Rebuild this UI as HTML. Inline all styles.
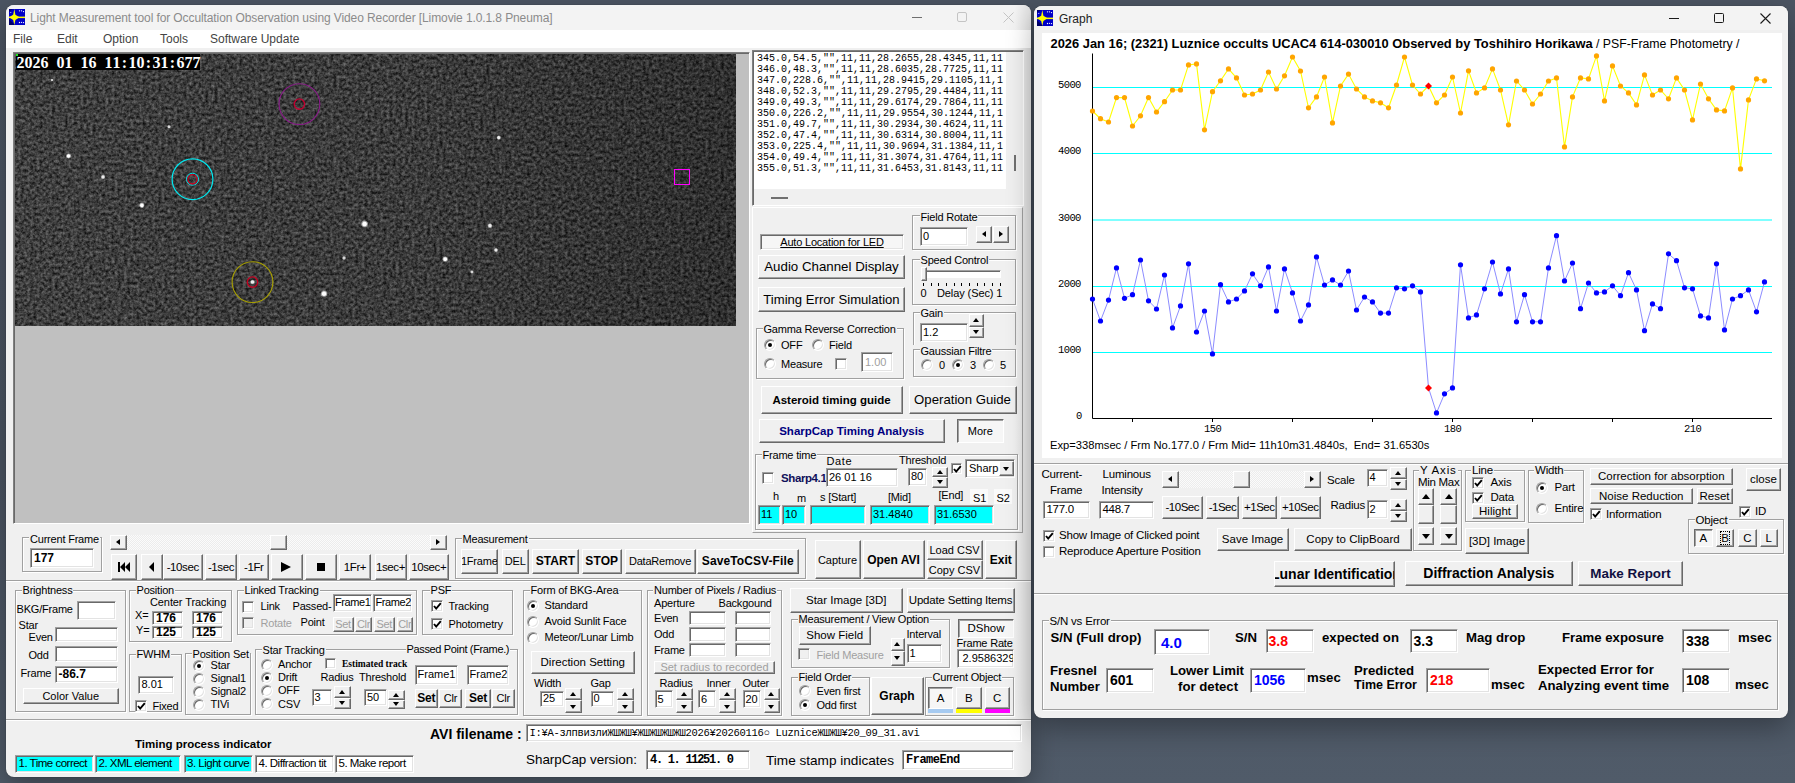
<!DOCTYPE html>
<html><head><meta charset="utf-8"><title>Limovie</title>
<style>
html,body{margin:0;padding:0;}
body{width:1795px;height:783px;overflow:hidden;position:relative;
 background:linear-gradient(180deg,#4c5563 0%,#4a5361 60%,#505b69 100%);
 font-family:"Liberation Sans",sans-serif;color:#000;}
div,span{box-sizing:border-box;}
body>div{position:absolute;}
.t{white-space:nowrap;}
.win{border-radius:8px;background:#f0f0f0;overflow:hidden;box-shadow:0 10px 28px rgba(0,0,0,0.32),0 0 1px rgba(0,0,0,0.5);}
.b{background:#f0f0f0;border:1px solid;border-color:#fff #696969 #696969 #fff;box-shadow:inset -1px -1px #a0a0a0;
 display:flex;align-items:center;justify-content:center;white-space:nowrap;overflow:hidden;font-size:11px;}
.bp{background:#f4f4f4;border:1px solid;border-color:#696969 #fff #fff #696969;box-shadow:inset 1px 1px #a0a0a0;
 display:flex;align-items:center;justify-content:center;white-space:nowrap;overflow:hidden;font-size:11px;}
.tb{background:#fff;border:1px solid;border-color:#a0a0a0 #fff #fff #a0a0a0;box-shadow:inset 1px 1px #696969,inset -1px -1px #e3e3e3;
 overflow:hidden;white-space:nowrap;display:flex;align-items:center;}
.tt{position:absolute;line-height:1;}
.gb{border:1px solid #a0a0a0;box-shadow:inset 1px 1px #fff,1px 1px #fff;}
.cb{background:#fff;border:1px solid;border-color:#a0a0a0 #fff #fff #a0a0a0;box-shadow:inset 1px 1px #696969,inset -1px -1px #e3e3e3;}
.rb{border-radius:50%;background:#fff;border:1px solid;border-color:#a0a0a0 #fff #fff #a0a0a0;box-shadow:inset 1px 1px #696969,inset -1px -1px #e3e3e3;}
.rd{position:absolute;left:3px;top:3px;width:4px;height:4px;border-radius:50%;background:#000;}
.tri{width:0;height:0;}
.mono{font-family:"Liberation Mono",monospace;}
.dis{color:#a0a0a0;}

</style></head><body>
<div class="win" style="left:6px;top:5px;width:1025px;height:772px;"></div>
<div style="left:6px;top:5px;width:1025px;height:25px;background:#f3f3f3;border-radius:8px 8px 0 0;"></div>
<div style="left:1015px;top:5px;width:16px;height:772px;background:linear-gradient(90deg,rgba(0,0,0,0),rgba(0,0,0,0.07));border-radius:0 8px 8px 0;"></div>
<div style="left:9px;top:9px;width:16px;height:16px;"><svg width="16" height="16" viewBox="0 0 16 16"><rect x="0" y="0" width="16" height="16" fill="#0000c8"/>
<path d="M0 10 L0 16 L6 16 L3 13 Z" fill="#000050" opacity="0.8"/><path d="M0 0 L4 0 L0 3 Z" fill="#000050" opacity="0.7"/>
<rect x="0" y="7.6" width="16" height="1.5" fill="#ffff00"/>
<path d="M5.3 0 L6.4 5.8 L10.5 8.35 L6.4 10.9 L5.3 16 L4.2 10.9 L0 8.35 L4.2 5.8 Z" fill="#ffff00"/>
<g fill="#fff"><circle cx="10.5" cy="1.8" r="0.65"/><circle cx="12.5" cy="1.8" r="0.65"/><circle cx="14.5" cy="2.6" r="0.65"/>
<circle cx="10.5" cy="13.5" r="0.65"/><circle cx="12.5" cy="13.3" r="0.65"/><circle cx="14.5" cy="13.6" r="0.65"/><circle cx="1.8" cy="3.5" r="0.5"/></g></svg></div>
<div class="t" style="left:30px;top:11px;font-size:12px;line-height:12px;color:#8b8b8b;letter-spacing:-0.1px;margin-top:1px;">Light Measurement tool for Occultation Observation using Video Recorder [Limovie 1.0.1.8 Pneuma]</div>
<div style="left:912px;top:17px;width:10px;height:1px;background:#6f6f6f;"></div>
<div style="left:957px;top:12px;width:10px;height:10px;border:1px solid #c4c4c4;border-radius:2px;"></div>
<svg style="position:absolute;left:1003px;top:12px" width="11" height="11"><path d="M0.5 0.5 L10.5 10.5 M10.5 0.5 L0.5 10.5" stroke="#c4c4c4" stroke-width="1"/></svg>
<div style="left:6px;top:30px;width:1025px;height:18px;background:#fff;"></div>
<div class="t" style="left:13px;top:33px;font-size:12px;line-height:12px;color:#444;">File</div>
<div class="t" style="left:57px;top:33px;font-size:12px;line-height:12px;color:#444;">Edit</div>
<div class="t" style="left:103px;top:33px;font-size:12px;line-height:12px;color:#444;">Option</div>
<div class="t" style="left:160px;top:33px;font-size:12px;line-height:12px;color:#444;">Tools</div>
<div class="t" style="left:210px;top:33px;font-size:12px;line-height:12px;color:#444;">Software Update</div>
<div style="left:13px;top:52px;width:737px;height:472px;background:#c0c0c0;border:1px solid;border-color:#808080 #fff #fff #808080;box-shadow:inset 1px 1px #696969;"></div>
<div style="left:15px;top:54px;width:721px;height:272px;overflow:hidden;"><svg width="721" height="272" style="position:absolute;left:0;top:0">
<defs>
<filter id="nz" x="0" y="0" width="100%" height="100%" color-interpolation-filters="sRGB">
<feTurbulence type="fractalNoise" baseFrequency="0.32" numOctaves="3" seed="11" result="n"/>
<feColorMatrix in="n" type="matrix" values="0.62 0 0 0 -0.065  0.62 0 0 0 -0.065  0.62 0 0 0 -0.065  0 0 0 0 1"/>
</filter>
<filter id="bl"><feGaussianBlur stdDeviation="0.6"/></filter>
<linearGradient id="vg" x1="0" x2="1" y1="0" y2="0">
<stop offset="0" stop-color="#434343"/><stop offset="0.6" stop-color="#3e3e3e"/><stop offset="1" stop-color="#343434"/>
</linearGradient>
<radialGradient id="st"><stop offset="0" stop-color="#fff"/><stop offset="0.45" stop-color="#fff"/><stop offset="1" stop-color="#fff" stop-opacity="0"/></radialGradient>
</defs>
<rect width="721" height="272" fill="url(#vg)"/>
<rect width="721" height="272" filter="url(#nz)" opacity="0.85"/>
<linearGradient id="dk" x1="0" x2="1"><stop offset="0" stop-color="#000" stop-opacity="0"/><stop offset="0.55" stop-color="#000" stop-opacity="0.05"/><stop offset="1" stop-color="#000" stop-opacity="0.22"/></linearGradient><rect width="721" height="272" fill="url(#dk)"/>
<circle cx="53.6" cy="102" r="2.9" fill="url(#st)" opacity="1"/>
<circle cx="88" cy="123" r="2.5" fill="url(#st)" opacity="0.9"/>
<circle cx="126.9" cy="151.3" r="3" fill="url(#st)" opacity="1"/>
<circle cx="154" cy="72.7" r="2" fill="url(#st)" opacity="0.8"/>
<circle cx="349.6" cy="170" r="3.9" fill="url(#st)" opacity="1"/>
<circle cx="329" cy="204" r="2.2" fill="url(#st)" opacity="0.8"/>
<circle cx="309" cy="239.7" r="3.8" fill="url(#st)" opacity="1"/>
<circle cx="237.5" cy="228" r="2.7" fill="url(#st)" opacity="0.9"/>
<circle cx="483.7" cy="83.6" r="2.5" fill="url(#st)" opacity="0.9"/>
<circle cx="475" cy="171.7" r="2.7" fill="url(#st)" opacity="0.9"/>
<circle cx="481" cy="196" r="2.3" fill="url(#st)" opacity="0.9"/>
<circle cx="430.2" cy="205.2" r="3.1" fill="url(#st)" opacity="1"/>
<circle cx="457" cy="218" r="2" fill="url(#st)" opacity="0.8"/>
<circle cx="37" cy="26" r="1.6" fill="url(#st)" opacity="0.7"/>
<circle cx="284.4" cy="50.1" r="20.4" fill="none" stroke="#8a1a8a" stroke-width="1.1"/>
<circle cx="284.4" cy="50.1" r="5.2" fill="none" stroke="#c00030" stroke-width="1.4"/>
<circle cx="177.5" cy="125.2" r="20.4" fill="none" stroke="#00e8f0" stroke-width="1.2"/>
<circle cx="177.5" cy="125.2" r="6" fill="none" stroke="#00e8f0" stroke-width="1"/>
<circle cx="177.5" cy="125.2" r="4.6" fill="none" stroke="#d00020" stroke-width="1.2"/>
<circle cx="237.5" cy="228.1" r="20.4" fill="none" stroke="#a8a000" stroke-width="1.1"/>
<circle cx="237.5" cy="228.1" r="5.2" fill="none" stroke="#c00020" stroke-width="1.4"/>
<rect x="659.5" y="115.5" width="15" height="15" fill="none" stroke="#ff00ff" stroke-width="1"/>
</svg></div>
<div style="left:16px;top:54px;width:184px;height:16px;background:#000;"></div>
<div style="left:16px;top:54px;width:2px;height:2px;background:#19e619;"></div>
<div class="t" style="left:16.5px;top:54.5px;height:16px;font-family:'Liberation Serif',serif;font-weight:bold;font-size:16px;line-height:16px;color:#fff;"><span style="display:inline-block;width:8px;text-align:center;">2</span><span style="display:inline-block;width:8px;text-align:center;">0</span><span style="display:inline-block;width:8px;text-align:center;">2</span><span style="display:inline-block;width:8px;text-align:center;">6</span><span style="display:inline-block;width:8px;text-align:center;">&nbsp;</span><span style="display:inline-block;width:8px;text-align:center;">0</span><span style="display:inline-block;width:8px;text-align:center;">1</span><span style="display:inline-block;width:8px;text-align:center;">&nbsp;</span><span style="display:inline-block;width:8px;text-align:center;">1</span><span style="display:inline-block;width:8px;text-align:center;">6</span><span style="display:inline-block;width:8px;text-align:center;">&nbsp;</span><span style="display:inline-block;width:8px;text-align:center;">1</span><span style="display:inline-block;width:8px;text-align:center;">1</span><span style="display:inline-block;width:8px;text-align:center;">:</span><span style="display:inline-block;width:8px;text-align:center;">1</span><span style="display:inline-block;width:8px;text-align:center;">0</span><span style="display:inline-block;width:8px;text-align:center;">:</span><span style="display:inline-block;width:8px;text-align:center;">3</span><span style="display:inline-block;width:8px;text-align:center;">1</span><span style="display:inline-block;width:8px;text-align:center;">:</span><span style="display:inline-block;width:8px;text-align:center;">6</span><span style="display:inline-block;width:8px;text-align:center;">7</span><span style="display:inline-block;width:8px;text-align:center;">7</span></div>
<div style="left:752px;top:50px;width:272px;height:156px;background:#f0f0f0;border:1px solid;border-color:#808080 #fff #fff #808080;box-shadow:inset 1px 1px #696969;"></div>
<div style="left:754px;top:52px;width:252px;height:137px;background:#fff;"></div>
<div class="t" style="left:757px;top:53px;font-family:'Liberation Mono',monospace;font-size:10px;line-height:11.03px;letter-spacing:0px;color:#000;">345.0,54.5,&quot;&quot;,11,11,28.2655,28.4345,11,11<br>346.0,48.3,&quot;&quot;,11,11,28.6035,28.7725,11,11<br>347.0,228.6,&quot;&quot;,11,11,28.9415,29.1105,11,1<br>348.0,52.3,&quot;&quot;,11,11,29.2795,29.4484,11,11<br>349.0,49.3,&quot;&quot;,11,11,29.6174,29.7864,11,11<br>350.0,226.2,&quot;&quot;,11,11,29.9554,30.1244,11,1<br>351.0,49.7,&quot;&quot;,11,11,30.2934,30.4624,11,11<br>352.0,47.4,&quot;&quot;,11,11,30.6314,30.8004,11,11<br>353.0,225.4,&quot;&quot;,11,11,30.9694,31.1384,11,1<br>354.0,49.4,&quot;&quot;,11,11,31.3074,31.4764,11,11<br>355.0,51.3,&quot;&quot;,11,11,31.6453,31.8143,11,11</div>
<div style="left:771px;top:197px;width:17px;height:2px;background:#707070;"></div>
<div style="left:1014px;top:155px;width:2px;height:16px;background:#707070;"></div>
<div style="left:752px;top:207px;width:271px;height:326px;border:1px solid;border-color:#fff #a0a0a0 #a0a0a0 #fff;"></div>
<div class="gb" style="left:912px;top:215px;width:104px;height:35px;"></div>
<div class="t" style="left:919.5px;top:212px;font-size:11px;line-height:11px;background:#f0f0f0;padding:0 1px;letter-spacing:-0.2px;">Field Rotate</div>
<div class="tb" style="left:920px;top:226.5px;width:48px;height:19.5px;"><span class="tt" style="font-size:11px;left:2px;">0</span></div>
<div class="b" style="left:976px;top:226px;width:16px;height:17px;"></div>
<div class="tri" style="left:982px;top:231px;border-top:3.5px solid transparent;border-bottom:3.5px solid transparent;border-right:4px solid #000;"></div>
<div class="b" style="left:993px;top:226px;width:16px;height:17px;"></div>
<div class="tri" style="left:999px;top:231px;border-top:3.5px solid transparent;border-bottom:3.5px solid transparent;border-left:4px solid #000;"></div>
<div class="tb" style="left:760px;top:234px;width:144px;height:16px;background:#f6f6f6;justify-content:center;"><span style="font-size:11px;text-decoration:underline;letter-spacing:-0.2px;">Auto Location for LED</span></div>
<div class="b" style="left:758px;top:254.5px;width:147px;height:24px;"><span style="font-size:13.3px;">Audio Channel Display</span></div>
<div class="b" style="left:758px;top:286.5px;width:147px;height:25px;"><span style="font-size:13.1px;">Timing Error Simulation</span></div>
<div class="gb" style="left:912px;top:258.5px;width:104px;height:46px;"></div>
<div class="t" style="left:919.5px;top:255px;font-size:11px;line-height:11px;background:#f0f0f0;padding:0 1px;letter-spacing:-0.2px;">Speed Control</div>
<div style="left:921px;top:270px;width:80px;height:8px;background:#fff;border:1px solid;border-color:#a0a0a0 #fff #fff #a0a0a0;box-shadow:inset 1px 1px #696969;"></div>
<div class="b" style="left:921px;top:267px;width:6px;height:14px;"></div>
<div style="left:923px;top:283px;width:1px;height:3px;background:#000;"></div>
<div style="left:930.6px;top:283px;width:1px;height:3px;background:#000;"></div>
<div style="left:938.3px;top:283px;width:1px;height:3px;background:#000;"></div>
<div style="left:946px;top:283px;width:1px;height:3px;background:#000;"></div>
<div style="left:953.6px;top:283px;width:1px;height:3px;background:#000;"></div>
<div style="left:961.2px;top:283px;width:1px;height:3px;background:#000;"></div>
<div style="left:968.9px;top:283px;width:1px;height:3px;background:#000;"></div>
<div style="left:976.5px;top:283px;width:1px;height:3px;background:#000;"></div>
<div style="left:984.2px;top:283px;width:1px;height:3px;background:#000;"></div>
<div style="left:991.9px;top:283px;width:1px;height:3px;background:#000;"></div>
<div style="left:999.5px;top:283px;width:1px;height:3px;background:#000;"></div>
<div class="t" style="left:920.5px;top:288px;font-size:11px;line-height:11px;letter-spacing:-0.2px;">0</div>
<div class="t" style="left:937px;top:288px;font-size:11px;line-height:11px;letter-spacing:-0.1px;">Delay (Sec) 1</div>
<div class="gb" style="left:912.5px;top:311.5px;width:103.5px;height:33.5px;border-bottom:none;box-shadow:inset 1px 1px #fff;"></div>
<div class="t" style="left:919.5px;top:308px;font-size:11px;line-height:11px;background:#f0f0f0;padding:0 1px;letter-spacing:-0.2px;">Gain</div>
<div class="tb" style="left:920px;top:323px;width:48px;height:18.5px;"><span class="tt" style="font-size:11px;left:2px;">1.2</span></div>
<div class="b" style="left:969px;top:314px;width:15px;height:12.5px;"></div>
<div class="b" style="left:969px;top:326.5px;width:15px;height:11.5px;"></div>
<div class="tri" style="left:973px;top:318.2px;border-left:3.5px solid transparent;border-right:3.5px solid transparent;border-bottom:4px solid #000;"></div>
<div class="tri" style="left:973px;top:330.2px;border-left:3.5px solid transparent;border-right:3.5px solid transparent;border-top:4px solid #000;"></div>
<div class="gb" style="left:912.5px;top:349px;width:103.5px;height:28px;"></div>
<div class="t" style="left:919.5px;top:345.5px;font-size:11px;line-height:11px;background:#f0f0f0;padding:0 1px;letter-spacing:-0.2px;">Gaussian Filtre</div>
<div class="rb" style="left:921px;top:359px;width:12px;height:12px;"></div>
<div class="t" style="left:939px;top:359.5px;font-size:11px;line-height:11px;letter-spacing:-0.2px;">0</div>
<div class="rb" style="left:952px;top:359px;width:12px;height:12px;"><div class="rd"></div></div>
<div class="t" style="left:970px;top:359.5px;font-size:11px;line-height:11px;letter-spacing:-0.2px;">3</div>
<div class="rb" style="left:983px;top:359px;width:12px;height:12px;"></div>
<div class="t" style="left:1000px;top:359.5px;font-size:11px;line-height:11px;letter-spacing:-0.2px;">5</div>
<div class="gb" style="left:755.5px;top:327.5px;width:148px;height:51px;"></div>
<div class="t" style="left:762.5px;top:324px;font-size:11px;line-height:11px;background:#f0f0f0;padding:0 1px;letter-spacing:-0.2px;">Gamma Reverse Correction</div>
<div class="rb" style="left:763.5px;top:339px;width:12px;height:12px;"><div class="rd"></div></div>
<div class="t" style="left:781px;top:339.5px;font-size:11px;line-height:11px;letter-spacing:-0.2px;">OFF</div>
<div class="rb" style="left:811.5px;top:339px;width:12px;height:12px;"></div>
<div class="t" style="left:829px;top:339.5px;font-size:11px;line-height:11px;letter-spacing:-0.2px;">Field</div>
<div class="rb" style="left:763.5px;top:358px;width:12px;height:12px;"></div>
<div class="t" style="left:781px;top:358.5px;font-size:11px;line-height:11px;letter-spacing:-0.2px;">Measure</div>
<div class="cb" style="left:835px;top:358px;width:12px;height:12px;"></div>
<div class="tb" style="left:861px;top:352px;width:32px;height:20px;"><span class="tt" style="font-size:11px;left:3px;color:#a0a0a0;">1.00</span></div>
<div class="b" style="left:760.5px;top:386px;width:142px;height:27.5px;"><span style="font-size:11.5px;font-weight:bold;">Asteroid timing guide</span></div>
<div class="b" style="left:908.5px;top:386px;width:108px;height:27.5px;"><span style="font-size:13.2px;">Operation Guide</span></div>
<div class="b" style="left:758.5px;top:418.5px;width:186.5px;height:24.5px;"><span style="font-size:11.5px;font-weight:bold;color:#000080;">SharpCap Timing Analysis</span></div>
<div class="bp" style="left:956.5px;top:418.5px;width:47.5px;height:24px;background:#f6f6f6;"><span style="font-size:11px;">More</span></div>
<div class="gb" style="left:754.5px;top:453.5px;width:263.5px;height:76.5px;"></div>
<div class="t" style="left:761.5px;top:450px;font-size:11px;line-height:11px;background:#f0f0f0;padding:0 1px;letter-spacing:-0.2px;">Frame time</div>
<div class="cb" style="left:762px;top:472px;width:12px;height:12px;"></div>
<div class="t" style="left:781px;top:473px;font-size:11.5px;line-height:11.5px;font-weight:bold;color:#10105a;letter-spacing:-0.4px;">Sharp4.1</div>
<div class="t" style="left:826.5px;top:456px;font-size:11px;line-height:11px;letter-spacing:0.6px;">Date</div>
<div class="tb" style="left:826px;top:467.5px;width:72px;height:19px;"><span class="tt" style="font-size:11px;left:2px;">26 01 16</span></div>
<div class="t" style="left:899px;top:455px;font-size:11px;line-height:11px;letter-spacing:-0.2px;">Threshold</div>
<div class="tb" style="left:908px;top:467.5px;width:19px;height:18px;"><span class="tt" style="font-size:11px;left:2px;">80</span></div>
<div class="b" style="left:932px;top:467px;width:16px;height:9.5px;"></div>
<div class="b" style="left:932px;top:476.5px;width:16px;height:11.5px;"></div>
<div class="tri" style="left:936.5px;top:469.8px;border-left:3.5px solid transparent;border-right:3.5px solid transparent;border-bottom:4px solid #000;"></div>
<div class="tri" style="left:936.5px;top:480.2px;border-left:3.5px solid transparent;border-right:3.5px solid transparent;border-top:4px solid #000;"></div>
<div class="cb" style="left:951px;top:462.5px;width:11px;height:11px;"><svg width="9" height="9" viewBox="0 0 9 9" style="position:absolute;left:1px;top:1px"><path d="M1 4 L3.2 6.6 L7.8 1.2" stroke="#000" stroke-width="1.9" fill="none"/></svg></div>
<div class="tb" style="left:965px;top:458.5px;width:50px;height:19px;"><span class="tt" style="font-size:11px;left:3px;">Sharp</span></div>
<div class="b" style="left:998.5px;top:460.5px;width:15px;height:15.5px;"></div>
<div class="tri" style="left:1002.5px;top:466.5px;border-left:3.5px solid transparent;border-right:3.5px solid transparent;border-top:4px solid #000;"></div>
<div class="t" style="left:773px;top:491px;font-size:11px;line-height:11px;letter-spacing:-0.2px;">h</div>
<div class="t" style="left:797px;top:492.5px;font-size:11px;line-height:11px;letter-spacing:-0.2px;">m</div>
<div class="t" style="left:820px;top:492px;font-size:11px;line-height:11px;letter-spacing:-0.2px;">s [Start]</div>
<div class="t" style="left:888px;top:492px;font-size:11px;line-height:11px;letter-spacing:-0.2px;">[Mid]</div>
<div class="t" style="left:938.5px;top:489.5px;font-size:11px;line-height:11px;letter-spacing:-0.2px;">[End]</div>
<div style="left:970px;top:489px;width:18px;height:15px;background:#fafafa;"></div>
<div style="left:994px;top:489px;width:18px;height:15px;background:#fafafa;"></div>
<div class="t" style="left:973px;top:493px;font-size:11px;line-height:11px;letter-spacing:-0.2px;">S1</div>
<div class="t" style="left:996.5px;top:493px;font-size:11px;line-height:11px;letter-spacing:-0.2px;">S2</div>
<div class="tb" style="left:758px;top:505px;width:23px;height:19.5px;background:#00ffff;"><span class="tt" style="font-size:11px;left:2px;">11</span></div>
<div class="tb" style="left:782px;top:505px;width:24px;height:19.5px;background:#00ffff;"><span class="tt" style="font-size:11px;left:2px;">10</span></div>
<div class="tb" style="left:810px;top:505px;width:56px;height:19.5px;background:#00ffff;"></div>
<div class="tb" style="left:870px;top:505px;width:60px;height:19.5px;background:#00ffff;"><span class="tt" style="font-size:11px;left:2px;">31.4840</span></div>
<div class="tb" style="left:934px;top:505px;width:59.5px;height:19.5px;background:#00ffff;"><span class="tt" style="font-size:11px;left:2px;">31.6530</span></div>
<div class="gb" style="left:22px;top:537px;width:80px;height:35px;"></div>
<div class="t" style="left:29px;top:534px;font-size:11px;line-height:11px;background:#f0f0f0;padding:0 1px;letter-spacing:-0.2px;">Current Frame</div>
<div class="tb" style="left:30px;top:548px;width:64px;height:20px;"><span class="tt" style="font-size:12px;left:3px;font-weight:bold;">177</span></div>
<div style="left:109.5px;top:535px;width:337.5px;height:15px;background:repeating-conic-gradient(#fbfbfb 0 25%,#ececec 0 50%) 0 0/2px 2px;"></div>
<div class="b" style="left:109.5px;top:535px;width:17px;height:15px;"></div>
<div class="tri" style="left:116px;top:539px;border-top:3.5px solid transparent;border-bottom:3.5px solid transparent;border-right:4px solid #000;"></div>
<div class="b" style="left:270px;top:535px;width:17px;height:15px;"></div>
<div class="b" style="left:430px;top:535px;width:16.5px;height:15px;"></div>
<div class="tri" style="left:436px;top:539px;border-top:3.5px solid transparent;border-bottom:3.5px solid transparent;border-left:4px solid #000;"></div>
<div class="b" style="left:111px;top:554px;width:26px;height:26px;"></div>
<div class="b" style="left:141px;top:554px;width:21.5px;height:26px;"></div>
<div class="b" style="left:162.5px;top:554px;width:40.5px;height:26px;"><span style="font-size:11.5px;letter-spacing:-0.4px;">-10sec</span></div>
<div class="b" style="left:205px;top:554px;width:32px;height:26px;"><span style="font-size:11.5px;letter-spacing:-0.4px;">-1sec</span></div>
<div class="b" style="left:239px;top:554px;width:29.5px;height:26px;"><span style="font-size:11.5px;letter-spacing:-0.4px;">-1Fr</span></div>
<div class="b" style="left:271px;top:554px;width:31.5px;height:26px;"></div>
<div class="b" style="left:305px;top:554px;width:32px;height:26px;"></div>
<div class="b" style="left:339px;top:554px;width:32px;height:26px;"><span style="font-size:11.5px;letter-spacing:-0.4px;">1Fr+</span></div>
<div class="b" style="left:374.5px;top:554px;width:32px;height:26px;"><span style="font-size:11.5px;letter-spacing:-0.4px;">1sec+</span></div>
<div class="b" style="left:408.5px;top:554px;width:40.5px;height:26px;"><span style="font-size:11.5px;letter-spacing:-0.4px;">10sec+</span></div>
<svg style="position:absolute;left:118px;top:562px" width="12" height="10"><path d="M0 0h2v10h-2z M2 5 L7 0 V10 Z M7 5 L12 0 V10 Z" fill="#000"/></svg>
<div class="tri" style="left:149px;top:562px;border-top:5px solid transparent;border-bottom:5px solid transparent;border-right:5px solid #000;"></div>
<svg style="position:absolute;left:281px;top:562px" width="11" height="10"><path d="M0 0 L10 5 L0 10 Z" fill="#000"/></svg>
<div style="left:317px;top:563px;width:8px;height:8px;background:#000;"></div>
<div class="gb" style="left:454.5px;top:538px;width:351px;height:41px;"></div>
<div class="t" style="left:461.5px;top:534px;font-size:11px;line-height:11px;background:#f0f0f0;padding:0 1px;letter-spacing:-0.2px;">Measurement</div>
<div class="b" style="left:460.5px;top:548.5px;width:37.5px;height:25.5px;"><span style="font-size:11px;letter-spacing:-0.2px;">1Frame</span></div>
<div class="b" style="left:502px;top:548.5px;width:26.5px;height:25.5px;"><span style="font-size:11px;letter-spacing:-0.2px;">DEL</span></div>
<div class="b" style="left:532px;top:548.5px;width:47px;height:25.5px;"><span style="font-size:12px;font-weight:bold;letter-spacing:0.1px;">START</span></div>
<div class="b" style="left:582px;top:548.5px;width:39.5px;height:25.5px;"><span style="font-size:12px;font-weight:bold;letter-spacing:0.1px;">STOP</span></div>
<div class="b" style="left:624.5px;top:548.5px;width:71px;height:25.5px;"><span style="font-size:11px;letter-spacing:-0.2px;">DataRemove</span></div>
<div class="b" style="left:696.5px;top:548.5px;width:102.5px;height:25.5px;"><span style="font-size:12px;font-weight:bold;letter-spacing:0.1px;">SaveToCSV-File</span></div>
<div class="b" style="left:814.5px;top:540px;width:46px;height:39px;"><span style="font-size:11px;">Capture</span></div>
<div class="b" style="left:862.5px;top:540px;width:62px;height:39px;"><span style="font-size:12px;font-weight:bold;">Open AVI</span></div>
<div class="b" style="left:926.5px;top:540px;width:56px;height:19.5px;"><span style="font-size:11px;">Load CSV</span></div>
<div class="b" style="left:926.5px;top:560px;width:56px;height:19px;"><span style="font-size:11px;">Copy CSV</span></div>
<div class="b" style="left:984.5px;top:540px;width:32.5px;height:39px;"><span style="font-size:12px;font-weight:bold;">Exit</span></div>
<div style="left:6px;top:580px;width:1025px;height:1px;background:#a0a0a0;border-bottom:1px solid #fff;height:2px;"></div>
<div class="gb" style="left:14.5px;top:590px;width:111px;height:121.5px;"></div>
<div class="t" style="left:21.5px;top:585px;font-size:11px;line-height:11px;background:#f0f0f0;padding:0 1px;letter-spacing:-0.2px;">Brightness</div>
<div class="t" style="left:16.5px;top:604px;font-size:11px;line-height:11px;letter-spacing:-0.2px;">BKG/Frame</div>
<div class="tb" style="left:77px;top:600.5px;width:38.5px;height:19px;"></div>
<div class="t" style="left:18.5px;top:620px;font-size:11px;line-height:11px;letter-spacing:-0.2px;">Star</div>
<div class="t" style="left:28.5px;top:631.5px;font-size:11px;line-height:11px;letter-spacing:-0.2px;">Even</div>
<div class="tb" style="left:54.5px;top:626.5px;width:63.5px;height:15.5px;"></div>
<div class="t" style="left:28.5px;top:650px;font-size:11px;line-height:11px;letter-spacing:-0.2px;">Odd</div>
<div class="tb" style="left:54.5px;top:646px;width:63.5px;height:16px;"></div>
<div class="t" style="left:20.5px;top:668px;font-size:11px;line-height:11px;letter-spacing:-0.2px;">Frame</div>
<div class="tb" style="left:54.5px;top:665.5px;width:63.5px;height:17px;"><span class="tt" style="font-size:12px;left:3px;font-weight:bold;">-86.7</span></div>
<div class="b" style="left:22.5px;top:687.5px;width:96.5px;height:16.5px;"><span style="font-size:11px;">Color Value</span></div>
<div class="gb" style="left:128.5px;top:590px;width:103px;height:51.5px;"></div>
<div class="t" style="left:135.5px;top:585px;font-size:11px;line-height:11px;background:#f0f0f0;padding:0 1px;letter-spacing:-0.2px;">Position</div>
<div class="t" style="left:150px;top:597px;font-size:11px;line-height:11px;letter-spacing:-0.1px;">Center Tracking</div>
<div class="t" style="left:135px;top:610px;font-size:11px;line-height:11px;letter-spacing:-0.2px;">X=</div>
<div class="t" style="left:136px;top:625px;font-size:11px;line-height:11px;letter-spacing:-0.2px;">Y=</div>
<div class="tb" style="left:152px;top:611px;width:31px;height:14px;"><span class="tt" style="font-size:12px;left:3px;font-weight:bold;">176</span></div>
<div class="tb" style="left:192px;top:611px;width:31px;height:14px;"><span class="tt" style="font-size:12px;left:3px;font-weight:bold;">176</span></div>
<div class="tb" style="left:152px;top:625.5px;width:31px;height:13.5px;"><span class="tt" style="font-size:12px;left:3px;font-weight:bold;">125</span></div>
<div class="tb" style="left:192px;top:625.5px;width:31px;height:13.5px;"><span class="tt" style="font-size:12px;left:3px;font-weight:bold;">125</span></div>
<div class="gb" style="left:128.5px;top:654px;width:53px;height:57.5px;"></div>
<div class="t" style="left:135.5px;top:649px;font-size:11px;line-height:11px;background:#f0f0f0;padding:0 1px;letter-spacing:-0.2px;">FWHM</div>
<div class="tb" style="left:137.5px;top:675.5px;width:36px;height:18.5px;"><span class="tt" style="font-size:11px;left:3px;">8.01</span></div>
<div class="cb" style="left:135px;top:700px;width:12px;height:12px;"><svg width="9" height="9" viewBox="0 0 9 9" style="position:absolute;left:1px;top:1px"><path d="M1 4 L3.2 6.6 L7.8 1.2" stroke="#000" stroke-width="1.9" fill="none"/></svg></div>
<div class="t" style="left:152.5px;top:701px;font-size:11px;line-height:11px;letter-spacing:-0.2px;">Fixed</div>
<div class="gb" style="left:184.5px;top:653px;width:66.5px;height:62px;"></div>
<div class="t" style="left:191.5px;top:648.5px;font-size:11px;line-height:11px;background:#f0f0f0;padding:0 1px;letter-spacing:-0.2px;">Position Set</div>
<div class="rb" style="left:192.5px;top:659.5px;width:12px;height:12px;"><div class="rd"></div></div>
<div class="t" style="left:210.5px;top:660px;font-size:11px;line-height:11px;letter-spacing:-0.2px;">Star</div>
<div class="rb" style="left:192.5px;top:672.5px;width:12px;height:12px;"></div>
<div class="t" style="left:210.5px;top:673px;font-size:11px;line-height:11px;letter-spacing:-0.2px;">Signal1</div>
<div class="rb" style="left:192.5px;top:685.5px;width:12px;height:12px;"></div>
<div class="t" style="left:210.5px;top:686px;font-size:11px;line-height:11px;letter-spacing:-0.2px;">Signal2</div>
<div class="rb" style="left:192.5px;top:698.5px;width:12px;height:12px;"></div>
<div class="t" style="left:210.5px;top:699px;font-size:11px;line-height:11px;letter-spacing:-0.2px;">TIVi</div>
<div class="gb" style="left:236.5px;top:590px;width:180px;height:45px;"></div>
<div class="t" style="left:243.5px;top:585px;font-size:11px;line-height:11px;background:#f0f0f0;padding:0 1px;letter-spacing:-0.2px;">Linked Tracking</div>
<div class="cb" style="left:242px;top:600.5px;width:12px;height:12px;"></div>
<div class="t" style="left:260.5px;top:601px;font-size:11px;line-height:11px;letter-spacing:-0.2px;">Link</div>
<div class="t" style="left:292.5px;top:601px;font-size:11px;line-height:11px;letter-spacing:-0.2px;">Passed-</div>
<div class="cb" style="left:242px;top:617px;width:12px;height:12px;background:#f0f0f0;"></div>
<div class="t" style="left:260.5px;top:618px;font-size:11px;line-height:11px;color:#a0a0a0;letter-spacing:-0.2px;">Rotate</div>
<div class="t" style="left:300.5px;top:617px;font-size:11px;line-height:11px;letter-spacing:-0.2px;">Point</div>
<div class="tb" style="left:332.5px;top:593.5px;width:39.5px;height:18px;"><span class="tt" style="font-size:11px;left:1.5px;letter-spacing:-0.4px;">Frame1</span></div>
<div class="tb" style="left:373px;top:593.5px;width:39px;height:18px;"><span class="tt" style="font-size:11px;left:1.5px;letter-spacing:-0.4px;">Frame2</span></div>
<div class="b" style="left:332.5px;top:616.5px;width:21px;height:15.5px;"><span style="font-size:11px;color:#a0a0a0;letter-spacing:-0.3px;">Set</span></div>
<div class="b" style="left:355px;top:616.5px;width:17px;height:15.5px;"><span style="font-size:11px;color:#a0a0a0;letter-spacing:-0.3px;">Clr</span></div>
<div class="b" style="left:373.5px;top:616.5px;width:21.5px;height:15.5px;"><span style="font-size:11px;color:#a0a0a0;letter-spacing:-0.3px;">Set</span></div>
<div class="b" style="left:396.5px;top:616.5px;width:16.5px;height:15.5px;"><span style="font-size:11px;color:#a0a0a0;letter-spacing:-0.3px;">Clr</span></div>
<div class="gb" style="left:422px;top:590px;width:91px;height:45px;"></div>
<div class="t" style="left:429.5px;top:585px;font-size:11px;line-height:11px;background:#f0f0f0;padding:0 1px;letter-spacing:-0.2px;">PSF</div>
<div class="cb" style="left:430.5px;top:600px;width:12px;height:12px;"><svg width="9" height="9" viewBox="0 0 9 9" style="position:absolute;left:1px;top:1px"><path d="M1 4 L3.2 6.6 L7.8 1.2" stroke="#000" stroke-width="1.9" fill="none"/></svg></div>
<div class="t" style="left:448.5px;top:600.5px;font-size:11px;line-height:11px;letter-spacing:-0.2px;">Tracking</div>
<div class="cb" style="left:430.5px;top:618px;width:12px;height:12px;"><svg width="9" height="9" viewBox="0 0 9 9" style="position:absolute;left:1px;top:1px"><path d="M1 4 L3.2 6.6 L7.8 1.2" stroke="#000" stroke-width="1.9" fill="none"/></svg></div>
<div class="t" style="left:448.5px;top:618.5px;font-size:11px;line-height:11px;letter-spacing:-0.2px;">Photometry</div>
<div class="gb" style="left:254.5px;top:649px;width:263px;height:66px;"></div>
<div class="t" style="left:261.5px;top:644.5px;font-size:11px;line-height:11px;background:#f0f0f0;padding:0 1px;letter-spacing:-0.2px;">Star Tracking</div>
<div class="t" style="left:405.5px;top:644px;font-size:11px;line-height:11px;letter-spacing:-0.35px;background:#f0f0f0;padding:0 1px;">Passed Point (Frame.)</div>
<div class="rb" style="left:261px;top:658.5px;width:12px;height:12px;"></div>
<div class="t" style="left:278px;top:659px;font-size:11px;line-height:11px;letter-spacing:-0.2px;">Anchor</div>
<div class="rb" style="left:261px;top:671.7px;width:12px;height:12px;"><div class="rd"></div></div>
<div class="t" style="left:278px;top:672.2px;font-size:11px;line-height:11px;letter-spacing:-0.2px;">Drift</div>
<div class="rb" style="left:261px;top:684.9px;width:12px;height:12px;"></div>
<div class="t" style="left:278px;top:685.4px;font-size:11px;line-height:11px;letter-spacing:-0.2px;">OFF</div>
<div class="rb" style="left:261px;top:698.1px;width:12px;height:12px;"></div>
<div class="t" style="left:278px;top:698.6px;font-size:11px;line-height:11px;letter-spacing:-0.2px;">CSV</div>
<div class="cb" style="left:325px;top:657.5px;width:11px;height:11px;"></div>
<div class="t" style="left:342px;top:660px;font-size:9.5px;line-height:9.5px;font-weight:bold;font-family:'Liberation Serif',serif;">Estimated track</div>
<div class="t" style="left:320.5px;top:672px;font-size:11px;line-height:11px;letter-spacing:-0.2px;">Radius</div>
<div class="t" style="left:359px;top:672px;font-size:11px;line-height:11px;letter-spacing:-0.2px;">Threshold</div>
<div class="tb" style="left:311.5px;top:688.5px;width:20px;height:17.5px;"><span class="tt" style="font-size:11px;left:2px;">3</span></div>
<div class="b" style="left:334px;top:686px;width:16.5px;height:11.5px;"></div>
<div class="b" style="left:334px;top:697.5px;width:16.5px;height:11.5px;"></div>
<div class="tri" style="left:338.8px;top:689.8px;border-left:3.5px solid transparent;border-right:3.5px solid transparent;border-bottom:4px solid #000;"></div>
<div class="tri" style="left:338.8px;top:701.2px;border-left:3.5px solid transparent;border-right:3.5px solid transparent;border-top:4px solid #000;"></div>
<div class="tb" style="left:364px;top:688.5px;width:23px;height:17.5px;"><span class="tt" style="font-size:11px;left:2px;">50</span></div>
<div class="b" style="left:388px;top:690px;width:17px;height:9.5px;"></div>
<div class="b" style="left:388px;top:699.5px;width:17px;height:9.5px;"></div>
<div class="tri" style="left:393px;top:692.8px;border-left:3.5px solid transparent;border-right:3.5px solid transparent;border-bottom:4px solid #000;"></div>
<div class="tri" style="left:393px;top:702.2px;border-left:3.5px solid transparent;border-right:3.5px solid transparent;border-top:4px solid #000;"></div>
<div class="tb" style="left:414.5px;top:664.5px;width:43px;height:20px;"><span class="tt" style="font-size:11px;left:2px;">Frame1</span></div>
<div class="tb" style="left:466.5px;top:664.5px;width:42.5px;height:20px;"><span class="tt" style="font-size:11px;left:2px;">Frame2</span></div>
<div class="b" style="left:414.5px;top:688.5px;width:23.5px;height:19.5px;"><span style="font-size:12px;font-weight:bold;letter-spacing:-0.2px;">Set</span></div>
<div class="b" style="left:439px;top:688.5px;width:23px;height:19.5px;"><span style="font-size:11px;letter-spacing:-0.2px;">Clr</span></div>
<div class="b" style="left:465px;top:688.5px;width:26px;height:19.5px;"><span style="font-size:12px;font-weight:bold;letter-spacing:-0.2px;">Set</span></div>
<div class="b" style="left:492px;top:688.5px;width:22.5px;height:19.5px;"><span style="font-size:11px;letter-spacing:-0.2px;">Clr</span></div>
<div class="gb" style="left:522.5px;top:590px;width:119px;height:126px;"></div>
<div class="t" style="left:529.5px;top:585px;font-size:11px;line-height:11px;background:#f0f0f0;padding:0 1px;letter-spacing:-0.2px;">Form of BKG-Area</div>
<div class="rb" style="left:526.5px;top:599.5px;width:12px;height:12px;"><div class="rd"></div></div>
<div class="t" style="left:544.5px;top:600px;font-size:11px;line-height:11px;letter-spacing:-0.2px;">Standard</div>
<div class="rb" style="left:526.5px;top:615.7px;width:12px;height:12px;"></div>
<div class="t" style="left:544.5px;top:616.2px;font-size:11px;line-height:11px;letter-spacing:-0.2px;">Avoid Sunlit Face</div>
<div class="rb" style="left:526.5px;top:631.9px;width:12px;height:12px;"></div>
<div class="t" style="left:544.5px;top:632.4px;font-size:11px;line-height:11px;letter-spacing:-0.2px;">Meteor/Lunar Limb</div>
<div class="b" style="left:530.5px;top:650.5px;width:104.5px;height:23px;"><span style="font-size:11.5px;">Direction Setting</span></div>
<div class="t" style="left:534px;top:678px;font-size:11px;line-height:11px;letter-spacing:-0.2px;">Width</div>
<div class="t" style="left:590.5px;top:678px;font-size:11px;line-height:11px;letter-spacing:-0.2px;">Gap</div>
<div class="tb" style="left:540px;top:690.5px;width:23.5px;height:16.5px;"><span class="tt" style="font-size:11px;left:2px;">25</span></div>
<div class="b" style="left:565px;top:688px;width:16.5px;height:12px;"></div>
<div class="b" style="left:565px;top:700px;width:16.5px;height:13px;"></div>
<div class="tri" style="left:569.8px;top:692px;border-left:3.5px solid transparent;border-right:3.5px solid transparent;border-bottom:4px solid #000;"></div>
<div class="tri" style="left:569.8px;top:704.5px;border-left:3.5px solid transparent;border-right:3.5px solid transparent;border-top:4px solid #000;"></div>
<div class="tb" style="left:590.5px;top:690.5px;width:23.5px;height:16.5px;"><span class="tt" style="font-size:11px;left:2px;">0</span></div>
<div class="b" style="left:617px;top:688px;width:16.5px;height:12px;"></div>
<div class="b" style="left:617px;top:700px;width:16.5px;height:13px;"></div>
<div class="tri" style="left:621.8px;top:692px;border-left:3.5px solid transparent;border-right:3.5px solid transparent;border-bottom:4px solid #000;"></div>
<div class="tri" style="left:621.8px;top:704.5px;border-left:3.5px solid transparent;border-right:3.5px solid transparent;border-top:4px solid #000;"></div>
<div class="gb" style="left:646.5px;top:590px;width:135.5px;height:126px;"></div>
<div class="t" style="left:653px;top:585px;font-size:11px;line-height:11px;background:#f0f0f0;padding:0 1px;letter-spacing:-0.2px;">Number of Pixels / Radius</div>
<div class="t" style="left:654px;top:597.5px;font-size:11px;line-height:11px;letter-spacing:-0.2px;">Aperture</div>
<div class="t" style="left:718.5px;top:597.5px;font-size:11px;line-height:11px;letter-spacing:-0.2px;">Backgound</div>
<div class="t" style="left:654px;top:612.5px;font-size:11px;line-height:11px;letter-spacing:-0.2px;">Even</div>
<div class="tb" style="left:689px;top:610.5px;width:36.5px;height:14.5px;"></div>
<div class="tb" style="left:734.5px;top:610.5px;width:36.5px;height:14.5px;"></div>
<div class="t" style="left:654px;top:629px;font-size:11px;line-height:11px;letter-spacing:-0.2px;">Odd</div>
<div class="tb" style="left:689px;top:627px;width:36.5px;height:14.5px;"></div>
<div class="tb" style="left:734.5px;top:627px;width:36.5px;height:14.5px;"></div>
<div class="t" style="left:654px;top:644.5px;font-size:11px;line-height:11px;letter-spacing:-0.2px;">Frame</div>
<div class="tb" style="left:689px;top:642.5px;width:36.5px;height:14.5px;"></div>
<div class="tb" style="left:734.5px;top:642.5px;width:36.5px;height:14.5px;"></div>
<div class="b" style="left:654px;top:660.5px;width:121px;height:13.5px;"><span style="font-size:11px;color:#a0a0a0;">Set  radius to recorded</span></div>
<div class="t" style="left:659.5px;top:678px;font-size:11px;line-height:11px;letter-spacing:-0.2px;">Radius</div>
<div class="t" style="left:706.5px;top:678px;font-size:11px;line-height:11px;letter-spacing:-0.2px;">Inner</div>
<div class="t" style="left:742.5px;top:678px;font-size:11px;line-height:11px;letter-spacing:-0.2px;">Outer</div>
<div class="tb" style="left:654.5px;top:690px;width:18.5px;height:18px;"><span class="tt" style="font-size:11px;left:2px;">5</span></div>
<div class="b" style="left:676px;top:688px;width:16.5px;height:12px;"></div>
<div class="b" style="left:676px;top:700px;width:16.5px;height:13px;"></div>
<div class="tri" style="left:680.8px;top:692px;border-left:3.5px solid transparent;border-right:3.5px solid transparent;border-bottom:4px solid #000;"></div>
<div class="tri" style="left:680.8px;top:704.5px;border-left:3.5px solid transparent;border-right:3.5px solid transparent;border-top:4px solid #000;"></div>
<div class="tb" style="left:698px;top:690px;width:18px;height:18px;"><span class="tt" style="font-size:11px;left:2px;">6</span></div>
<div class="b" style="left:719px;top:688px;width:17px;height:12px;"></div>
<div class="b" style="left:719px;top:700px;width:17px;height:13px;"></div>
<div class="tri" style="left:724px;top:692px;border-left:3.5px solid transparent;border-right:3.5px solid transparent;border-bottom:4px solid #000;"></div>
<div class="tri" style="left:724px;top:704.5px;border-left:3.5px solid transparent;border-right:3.5px solid transparent;border-top:4px solid #000;"></div>
<div class="tb" style="left:742.5px;top:690px;width:18.5px;height:18px;"><span class="tt" style="font-size:11px;left:2px;">20</span></div>
<div class="b" style="left:763.5px;top:688px;width:16.5px;height:12px;"></div>
<div class="b" style="left:763.5px;top:700px;width:16.5px;height:13px;"></div>
<div class="tri" style="left:768.2px;top:692px;border-left:3.5px solid transparent;border-right:3.5px solid transparent;border-bottom:4px solid #000;"></div>
<div class="tri" style="left:768.2px;top:704.5px;border-left:3.5px solid transparent;border-right:3.5px solid transparent;border-top:4px solid #000;"></div>
<div class="b" style="left:790px;top:588px;width:112.5px;height:24.5px;"><span style="font-size:11.5px;">Star Image [3D]</span></div>
<div class="b" style="left:906.5px;top:588px;width:108px;height:24.5px;"><span style="font-size:11.5px;letter-spacing:-0.2px;">Update Setting Items</span></div>
<div class="gb" style="left:790.5px;top:618.5px;width:159px;height:49px;"></div>
<div class="t" style="left:797.5px;top:614px;font-size:11px;line-height:11px;background:#f0f0f0;padding:0 1px;letter-spacing:-0.2px;">Measurement / View Option</div>
<div class="b" style="left:799px;top:626px;width:71.5px;height:18.5px;"><span style="font-size:11.5px;">Show Field</span></div>
<div class="cb" style="left:798px;top:648px;width:12px;height:12px;background:#f0f0f0;"></div>
<div class="t" style="left:816.5px;top:649.5px;font-size:11px;line-height:11px;color:#a0a0a0;letter-spacing:-0.2px;">Field Measure</div>
<div class="b" style="left:890.5px;top:637.5px;width:14.5px;height:13.5px;"></div>
<div class="b" style="left:890.5px;top:651px;width:14.5px;height:14.5px;"></div>
<div class="tri" style="left:894.2px;top:642.2px;border-left:3.5px solid transparent;border-right:3.5px solid transparent;border-bottom:4px solid #000;"></div>
<div class="tri" style="left:894.2px;top:656.2px;border-left:3.5px solid transparent;border-right:3.5px solid transparent;border-top:4px solid #000;"></div>
<div class="t" style="left:906.5px;top:629px;font-size:11px;line-height:11px;letter-spacing:-0.2px;">Interval</div>
<div class="tb" style="left:906.5px;top:644px;width:35.5px;height:19px;"><span class="tt" style="font-size:11px;left:2px;">1</span></div>
<div class="bp" style="left:958px;top:618.5px;width:56px;height:19px;background:#f6f6f6;"><span style="font-size:11.5px;">DShow</span></div>
<div class="t" style="left:956.5px;top:638px;font-size:11px;line-height:11px;letter-spacing:-0.2px;">Frame Rate</div>
<div class="tb" style="left:956.5px;top:648.5px;width:57.5px;height:19px;"><span class="tt" style="font-size:11px;left:5px;">2.9586329</span></div>
<div class="gb" style="left:790.5px;top:676.5px;width:79.5px;height:39px;"></div>
<div class="t" style="left:797.5px;top:672px;font-size:11px;line-height:11px;background:#f0f0f0;padding:0 1px;letter-spacing:-0.2px;">Field Order</div>
<div class="rb" style="left:799px;top:685px;width:12px;height:12px;"></div>
<div class="t" style="left:816.5px;top:686px;font-size:11px;line-height:11px;letter-spacing:-0.2px;">Even first</div>
<div class="rb" style="left:799px;top:699px;width:12px;height:12px;"><div class="rd"></div></div>
<div class="t" style="left:816.5px;top:700px;font-size:11px;line-height:11px;letter-spacing:-0.2px;">Odd first</div>
<div class="b" style="left:870.5px;top:677px;width:53px;height:38px;"><span style="font-size:12px;font-weight:bold;">Graph</span></div>
<div class="gb" style="left:925px;top:676.5px;width:88.5px;height:39px;"></div>
<div class="t" style="left:931.5px;top:672px;font-size:11px;line-height:11px;background:#f0f0f0;padding:0 1px;letter-spacing:-0.2px;">Current Object</div>
<div class="bp" style="left:928px;top:687px;width:25px;height:21.5px;background:#f6f6f6;"><span style="font-size:11.5px;">A</span></div>
<div class="b" style="left:956px;top:687px;width:25.5px;height:21.5px;"><span style="font-size:11.5px;">B</span></div>
<div class="b" style="left:984.5px;top:687px;width:25.5px;height:21.5px;"><span style="font-size:11.5px;">C</span></div>
<div style="left:928px;top:708.5px;width:25px;height:4px;background:#a6caf0;"></div>
<div style="left:956px;top:708.5px;width:25.5px;height:4px;background:#ffff00;"></div>
<div style="left:984.5px;top:708.5px;width:25.5px;height:4px;background:#ff00ff;"></div>
<div style="left:6px;top:719px;width:1025px;height:2px;background:#a0a0a0;border-bottom:1px solid #fff;"></div>
<div class="t" style="left:135px;top:739px;font-size:11.5px;line-height:11.5px;font-weight:bold;">Timing process indicator</div>
<div class="tb" style="left:15px;top:754.5px;width:78.5px;height:18.5px;background:#00ffff;"><span class="tt" style="font-size:11.5px;left:2.5px;letter-spacing:-0.5px;">1. Time correct</span></div>
<div class="tb" style="left:95px;top:754.5px;width:86px;height:18.5px;background:#00ffff;"><span class="tt" style="font-size:11.5px;left:2.5px;letter-spacing:-0.5px;">2. XML element</span></div>
<div class="tb" style="left:183.5px;top:754.5px;width:69.5px;height:18.5px;background:#00ffff;"><span class="tt" style="font-size:11.5px;left:2.5px;letter-spacing:-0.5px;">3. Light curve</span></div>
<div class="tb" style="left:255px;top:754.5px;width:78.5px;height:18.5px;background:#fff;"><span class="tt" style="font-size:11.5px;left:2.5px;letter-spacing:-0.5px;">4. Diffraction tit</span></div>
<div class="tb" style="left:335px;top:754.5px;width:78.5px;height:18.5px;background:#fff;"><span class="tt" style="font-size:11.5px;left:2.5px;letter-spacing:-0.5px;">5. Make report</span></div>
<div class="t" style="left:430px;top:727px;font-size:14px;line-height:14px;font-weight:bold;">AVI filename :</div>
<div class="tb" style="left:525.5px;top:724px;width:496.5px;height:18px;"><span class="tt" style="font-size:10.5px;left:3px;letter-spacing:-0.3px;font-family:'Liberation Mono',monospace;">I:¥A-злпвизлиЖШЖШ¥ЖШЖШЖШЖШ2026¥20260116○ LuzniceЖШЖШ¥20_09_31.avi</span></div>
<div class="t" style="left:526px;top:753px;font-size:13.4px;line-height:13.4px;">SharpCap version:</div>
<div class="tb" style="left:646px;top:750px;width:104px;height:19.5px;"><span class="tt" style="font-size:12px;left:3px;font-weight:bold;letter-spacing:-1.3px;font-family:'Liberation Mono',monospace;">4. 1. 11251. 0</span></div>
<div class="t" style="left:766px;top:754px;font-size:13.6px;line-height:13.6px;">Time stamp indicates</div>
<div class="tb" style="left:902px;top:750px;width:112px;height:19.5px;"><span class="tt" style="font-size:12px;left:3px;font-weight:bold;letter-spacing:-0.5px;font-family:'Liberation Mono',monospace;">FrameEnd</span></div>
<div class="win" style="left:1034px;top:6px;width:754px;height:712px;"></div>
<div style="left:1034px;top:6px;width:754px;height:24px;background:#f3f3f3;border-radius:8px 8px 0 0;"></div>
<div style="left:1037px;top:10px;width:16px;height:16px;"><svg width="16" height="16" viewBox="0 0 16 16"><rect x="0" y="0" width="16" height="16" fill="#0000c8"/>
<path d="M0 10 L0 16 L6 16 L3 13 Z" fill="#000050" opacity="0.8"/><path d="M0 0 L4 0 L0 3 Z" fill="#000050" opacity="0.7"/>
<rect x="0" y="7.6" width="16" height="1.5" fill="#ffff00"/>
<path d="M5.3 0 L6.4 5.8 L10.5 8.35 L6.4 10.9 L5.3 16 L4.2 10.9 L0 8.35 L4.2 5.8 Z" fill="#ffff00"/>
<g fill="#fff"><circle cx="10.5" cy="1.8" r="0.65"/><circle cx="12.5" cy="1.8" r="0.65"/><circle cx="14.5" cy="2.6" r="0.65"/>
<circle cx="10.5" cy="13.5" r="0.65"/><circle cx="12.5" cy="13.3" r="0.65"/><circle cx="14.5" cy="13.6" r="0.65"/><circle cx="1.8" cy="3.5" r="0.5"/></g></svg></div>
<div class="t" style="left:1059px;top:13px;font-size:12px;line-height:12px;color:#222;">Graph</div>
<div style="left:1669px;top:18px;width:10px;height:1px;background:#1a1a1a;"></div>
<div style="left:1714px;top:13px;width:10px;height:10px;border:1px solid #1a1a1a;border-radius:1.5px;"></div>
<svg style="position:absolute;left:1759.5px;top:12.5px" width="11" height="11"><path d="M0.5 0.5 L10.5 10.5 M10.5 0.5 L0.5 10.5" stroke="#1a1a1a" stroke-width="1.1"/></svg>
<div style="left:1042px;top:33px;width:740px;height:425px;background:#fff;"></div>
<svg style="position:absolute;left:1042px;top:33px" width="740" height="425"><line x1="50.5" y1="54.5" x2="730" y2="54.5" stroke="#00ffff" stroke-width="1.2"/>
<line x1="50.5" y1="120.5" x2="730" y2="120.5" stroke="#00ffff" stroke-width="1.2"/>
<line x1="50.5" y1="187" x2="730" y2="187" stroke="#00ffff" stroke-width="1.2"/>
<line x1="50.5" y1="253.5" x2="730" y2="253.5" stroke="#00ffff" stroke-width="1.2"/>
<line x1="50.5" y1="319.5" x2="730" y2="319.5" stroke="#00ffff" stroke-width="1.2"/>
<line x1="50.5" y1="20.5" x2="50.5" y2="385.5" stroke="#000" stroke-width="1"/>
<line x1="50.5" y1="385.5" x2="730" y2="385.5" stroke="#000" stroke-width="1"/>
<line x1="90.5" y1="385.5" x2="90.5" y2="389" stroke="#000" stroke-width="1"/>
<line x1="170.5" y1="385.5" x2="170.5" y2="389" stroke="#000" stroke-width="1"/>
<line x1="250.5" y1="385.5" x2="250.5" y2="389" stroke="#000" stroke-width="1"/>
<line x1="330.5" y1="385.5" x2="330.5" y2="389" stroke="#000" stroke-width="1"/>
<line x1="410.5" y1="385.5" x2="410.5" y2="389" stroke="#000" stroke-width="1"/>
<line x1="490.5" y1="385.5" x2="490.5" y2="389" stroke="#000" stroke-width="1"/>
<line x1="570.5" y1="385.5" x2="570.5" y2="389" stroke="#000" stroke-width="1"/>
<line x1="650.5" y1="385.5" x2="650.5" y2="389" stroke="#000" stroke-width="1"/>
<polyline points="50.5,78 58.5,85.7 66.5,89 74.5,64.6 82.5,64.6 90.5,93 98.5,82.8 106.5,64.6 114.5,79 122.5,68.7 130.5,57 138.5,57 146.5,31.9 154.5,30.9 162.5,96.8 170.5,58.7 178.5,47.8 186.5,35.9 194.5,44.9 202.5,62 210.5,61 218.5,57 226.5,39 234.5,56 242.5,42.8 250.5,24 258.5,38 266.5,74.8 274.5,63.9 282.5,44 290.5,89.9 298.5,53 306.5,41.1 314.5,56 322.5,63.9 330.5,67.9 338.5,69.8 346.5,74.8 354.5,52 362.5,24 370.5,52 378.5,61 386.5,53 394.5,69.8 402.5,62 410.5,44 418.5,80 426.5,37.8 434.5,59.9 442.5,54.9 450.5,35.9 458.5,57 466.5,91.8 474.5,48 482.5,57 490.5,71 498.5,61 506.5,48 514.5,44.9 522.5,113.9 530.5,63.9 538.5,44.9 546.5,45.9 554.5,22.9 562.5,67.9 570.5,32.9 578.5,53 586.5,59.9 594.5,71.9 602.5,41.9 610.5,62 618.5,57 626.5,65.8 634.5,44.9 642.5,57 650.5,86.9 658.5,51 666.5,65.8 674.5,76.9 682.5,77.9 690.5,54.9 698.5,135.9 706.5,66.9 714.5,45.9 722.5,47.8" fill="none" stroke="#ffff00" stroke-width="1.1"/>
<polyline points="50.5,266 58.5,288 66.5,267.1 74.5,234.9 82.5,265.3 90.5,261.7 98.5,227 106.5,267.8 114.5,276 122.5,242 130.5,294.9 138.5,272.9 146.5,230.8 154.5,299 162.5,278 170.5,320.9 178.5,251.7 186.5,268.9 194.5,266 202.5,257.9 210.5,240.8 218.5,252.8 226.5,233.9 234.5,278 242.5,235.9 250.5,259.9 258.5,288 266.5,271.9 274.5,223.9 282.5,252 290.5,246.9 298.5,252 306.5,238 314.5,277 322.5,264 330.5,268.9 338.5,280.1 346.5,280.1 354.5,254.8 362.5,255.8 370.5,252.8 378.5,258.9 386.5,354.9 394.5,379.9 402.5,360.8 410.5,354.9 418.5,231.8 426.5,284.9 434.5,281.9 442.5,255.8 450.5,229 458.5,260.9 466.5,235.9 474.5,288.8 482.5,261.7 490.5,288.8 498.5,288.8 506.5,234.9 514.5,202.7 522.5,247.9 530.5,230 538.5,275.7 546.5,250 554.5,259.9 562.5,258.9 570.5,252.8 578.5,262.7 586.5,239.7 594.5,256.9 602.5,297.7 610.5,270.9 618.5,275.7 626.5,220.9 634.5,227.7 642.5,254.8 650.5,255.8 658.5,282.9 666.5,284.9 674.5,230.8 682.5,296.9 690.5,266 698.5,262.7 706.5,256.9 714.5,278.8 722.5,248.9" fill="none" stroke="#8c8cff" stroke-width="1"/>
<circle cx="50.5" cy="78" r="2.6" fill="#ffa500"/>
<circle cx="58.5" cy="85.7" r="2.6" fill="#ffa500"/>
<circle cx="66.5" cy="89" r="2.6" fill="#ffa500"/>
<circle cx="74.5" cy="64.6" r="2.6" fill="#ffa500"/>
<circle cx="82.5" cy="64.6" r="2.6" fill="#ffa500"/>
<circle cx="90.5" cy="93" r="2.6" fill="#ffa500"/>
<circle cx="98.5" cy="82.8" r="2.6" fill="#ffa500"/>
<circle cx="106.5" cy="64.6" r="2.6" fill="#ffa500"/>
<circle cx="114.5" cy="79" r="2.6" fill="#ffa500"/>
<circle cx="122.5" cy="68.7" r="2.6" fill="#ffa500"/>
<circle cx="130.5" cy="57" r="2.6" fill="#ffa500"/>
<circle cx="138.5" cy="57" r="2.6" fill="#ffa500"/>
<circle cx="146.5" cy="31.9" r="2.6" fill="#ffa500"/>
<circle cx="154.5" cy="30.9" r="2.6" fill="#ffa500"/>
<circle cx="162.5" cy="96.8" r="2.6" fill="#ffa500"/>
<circle cx="170.5" cy="58.7" r="2.6" fill="#ffa500"/>
<circle cx="178.5" cy="47.8" r="2.6" fill="#ffa500"/>
<circle cx="186.5" cy="35.9" r="2.6" fill="#ffa500"/>
<circle cx="194.5" cy="44.9" r="2.6" fill="#ffa500"/>
<circle cx="202.5" cy="62" r="2.6" fill="#ffa500"/>
<circle cx="210.5" cy="61" r="2.6" fill="#ffa500"/>
<circle cx="218.5" cy="57" r="2.6" fill="#ffa500"/>
<circle cx="226.5" cy="39" r="2.6" fill="#ffa500"/>
<circle cx="234.5" cy="56" r="2.6" fill="#ffa500"/>
<circle cx="242.5" cy="42.8" r="2.6" fill="#ffa500"/>
<circle cx="250.5" cy="24" r="2.6" fill="#ffa500"/>
<circle cx="258.5" cy="38" r="2.6" fill="#ffa500"/>
<circle cx="266.5" cy="74.8" r="2.6" fill="#ffa500"/>
<circle cx="274.5" cy="63.9" r="2.6" fill="#ffa500"/>
<circle cx="282.5" cy="44" r="2.6" fill="#ffa500"/>
<circle cx="290.5" cy="89.9" r="2.6" fill="#ffa500"/>
<circle cx="298.5" cy="53" r="2.6" fill="#ffa500"/>
<circle cx="306.5" cy="41.1" r="2.6" fill="#ffa500"/>
<circle cx="314.5" cy="56" r="2.6" fill="#ffa500"/>
<circle cx="322.5" cy="63.9" r="2.6" fill="#ffa500"/>
<circle cx="330.5" cy="67.9" r="2.6" fill="#ffa500"/>
<circle cx="338.5" cy="69.8" r="2.6" fill="#ffa500"/>
<circle cx="346.5" cy="74.8" r="2.6" fill="#ffa500"/>
<circle cx="354.5" cy="52" r="2.6" fill="#ffa500"/>
<circle cx="362.5" cy="24" r="2.6" fill="#ffa500"/>
<circle cx="370.5" cy="52" r="2.6" fill="#ffa500"/>
<circle cx="378.5" cy="61" r="2.6" fill="#ffa500"/>
<circle cx="394.5" cy="69.8" r="2.6" fill="#ffa500"/>
<circle cx="402.5" cy="62" r="2.6" fill="#ffa500"/>
<circle cx="410.5" cy="44" r="2.6" fill="#ffa500"/>
<circle cx="418.5" cy="80" r="2.6" fill="#ffa500"/>
<circle cx="426.5" cy="37.8" r="2.6" fill="#ffa500"/>
<circle cx="434.5" cy="59.9" r="2.6" fill="#ffa500"/>
<circle cx="442.5" cy="54.9" r="2.6" fill="#ffa500"/>
<circle cx="450.5" cy="35.9" r="2.6" fill="#ffa500"/>
<circle cx="458.5" cy="57" r="2.6" fill="#ffa500"/>
<circle cx="466.5" cy="91.8" r="2.6" fill="#ffa500"/>
<circle cx="474.5" cy="48" r="2.6" fill="#ffa500"/>
<circle cx="482.5" cy="57" r="2.6" fill="#ffa500"/>
<circle cx="490.5" cy="71" r="2.6" fill="#ffa500"/>
<circle cx="498.5" cy="61" r="2.6" fill="#ffa500"/>
<circle cx="506.5" cy="48" r="2.6" fill="#ffa500"/>
<circle cx="514.5" cy="44.9" r="2.6" fill="#ffa500"/>
<circle cx="522.5" cy="113.9" r="2.6" fill="#ffa500"/>
<circle cx="530.5" cy="63.9" r="2.6" fill="#ffa500"/>
<circle cx="538.5" cy="44.9" r="2.6" fill="#ffa500"/>
<circle cx="546.5" cy="45.9" r="2.6" fill="#ffa500"/>
<circle cx="554.5" cy="22.9" r="2.6" fill="#ffa500"/>
<circle cx="562.5" cy="67.9" r="2.6" fill="#ffa500"/>
<circle cx="570.5" cy="32.9" r="2.6" fill="#ffa500"/>
<circle cx="578.5" cy="53" r="2.6" fill="#ffa500"/>
<circle cx="586.5" cy="59.9" r="2.6" fill="#ffa500"/>
<circle cx="594.5" cy="71.9" r="2.6" fill="#ffa500"/>
<circle cx="602.5" cy="41.9" r="2.6" fill="#ffa500"/>
<circle cx="610.5" cy="62" r="2.6" fill="#ffa500"/>
<circle cx="618.5" cy="57" r="2.6" fill="#ffa500"/>
<circle cx="626.5" cy="65.8" r="2.6" fill="#ffa500"/>
<circle cx="634.5" cy="44.9" r="2.6" fill="#ffa500"/>
<circle cx="642.5" cy="57" r="2.6" fill="#ffa500"/>
<circle cx="650.5" cy="86.9" r="2.6" fill="#ffa500"/>
<circle cx="658.5" cy="51" r="2.6" fill="#ffa500"/>
<circle cx="666.5" cy="65.8" r="2.6" fill="#ffa500"/>
<circle cx="674.5" cy="76.9" r="2.6" fill="#ffa500"/>
<circle cx="682.5" cy="77.9" r="2.6" fill="#ffa500"/>
<circle cx="690.5" cy="54.9" r="2.6" fill="#ffa500"/>
<circle cx="698.5" cy="135.9" r="2.6" fill="#ffa500"/>
<circle cx="706.5" cy="66.9" r="2.6" fill="#ffa500"/>
<circle cx="714.5" cy="45.9" r="2.6" fill="#ffa500"/>
<circle cx="722.5" cy="47.8" r="2.6" fill="#ffa500"/>
<circle cx="50.5" cy="266" r="2.6" fill="#0000ff"/>
<circle cx="58.5" cy="288" r="2.6" fill="#0000ff"/>
<circle cx="66.5" cy="267.1" r="2.6" fill="#0000ff"/>
<circle cx="74.5" cy="234.9" r="2.6" fill="#0000ff"/>
<circle cx="82.5" cy="265.3" r="2.6" fill="#0000ff"/>
<circle cx="90.5" cy="261.7" r="2.6" fill="#0000ff"/>
<circle cx="98.5" cy="227" r="2.6" fill="#0000ff"/>
<circle cx="106.5" cy="267.8" r="2.6" fill="#0000ff"/>
<circle cx="114.5" cy="276" r="2.6" fill="#0000ff"/>
<circle cx="122.5" cy="242" r="2.6" fill="#0000ff"/>
<circle cx="130.5" cy="294.9" r="2.6" fill="#0000ff"/>
<circle cx="138.5" cy="272.9" r="2.6" fill="#0000ff"/>
<circle cx="146.5" cy="230.8" r="2.6" fill="#0000ff"/>
<circle cx="154.5" cy="299" r="2.6" fill="#0000ff"/>
<circle cx="162.5" cy="278" r="2.6" fill="#0000ff"/>
<circle cx="170.5" cy="320.9" r="2.6" fill="#0000ff"/>
<circle cx="178.5" cy="251.7" r="2.6" fill="#0000ff"/>
<circle cx="186.5" cy="268.9" r="2.6" fill="#0000ff"/>
<circle cx="194.5" cy="266" r="2.6" fill="#0000ff"/>
<circle cx="202.5" cy="257.9" r="2.6" fill="#0000ff"/>
<circle cx="210.5" cy="240.8" r="2.6" fill="#0000ff"/>
<circle cx="218.5" cy="252.8" r="2.6" fill="#0000ff"/>
<circle cx="226.5" cy="233.9" r="2.6" fill="#0000ff"/>
<circle cx="234.5" cy="278" r="2.6" fill="#0000ff"/>
<circle cx="242.5" cy="235.9" r="2.6" fill="#0000ff"/>
<circle cx="250.5" cy="259.9" r="2.6" fill="#0000ff"/>
<circle cx="258.5" cy="288" r="2.6" fill="#0000ff"/>
<circle cx="266.5" cy="271.9" r="2.6" fill="#0000ff"/>
<circle cx="274.5" cy="223.9" r="2.6" fill="#0000ff"/>
<circle cx="282.5" cy="252" r="2.6" fill="#0000ff"/>
<circle cx="290.5" cy="246.9" r="2.6" fill="#0000ff"/>
<circle cx="298.5" cy="252" r="2.6" fill="#0000ff"/>
<circle cx="306.5" cy="238" r="2.6" fill="#0000ff"/>
<circle cx="314.5" cy="277" r="2.6" fill="#0000ff"/>
<circle cx="322.5" cy="264" r="2.6" fill="#0000ff"/>
<circle cx="330.5" cy="268.9" r="2.6" fill="#0000ff"/>
<circle cx="338.5" cy="280.1" r="2.6" fill="#0000ff"/>
<circle cx="346.5" cy="280.1" r="2.6" fill="#0000ff"/>
<circle cx="354.5" cy="254.8" r="2.6" fill="#0000ff"/>
<circle cx="362.5" cy="255.8" r="2.6" fill="#0000ff"/>
<circle cx="370.5" cy="252.8" r="2.6" fill="#0000ff"/>
<circle cx="378.5" cy="258.9" r="2.6" fill="#0000ff"/>
<circle cx="394.5" cy="379.9" r="2.6" fill="#0000ff"/>
<circle cx="402.5" cy="360.8" r="2.6" fill="#0000ff"/>
<circle cx="410.5" cy="354.9" r="2.6" fill="#0000ff"/>
<circle cx="418.5" cy="231.8" r="2.6" fill="#0000ff"/>
<circle cx="426.5" cy="284.9" r="2.6" fill="#0000ff"/>
<circle cx="434.5" cy="281.9" r="2.6" fill="#0000ff"/>
<circle cx="442.5" cy="255.8" r="2.6" fill="#0000ff"/>
<circle cx="450.5" cy="229" r="2.6" fill="#0000ff"/>
<circle cx="458.5" cy="260.9" r="2.6" fill="#0000ff"/>
<circle cx="466.5" cy="235.9" r="2.6" fill="#0000ff"/>
<circle cx="474.5" cy="288.8" r="2.6" fill="#0000ff"/>
<circle cx="482.5" cy="261.7" r="2.6" fill="#0000ff"/>
<circle cx="490.5" cy="288.8" r="2.6" fill="#0000ff"/>
<circle cx="498.5" cy="288.8" r="2.6" fill="#0000ff"/>
<circle cx="506.5" cy="234.9" r="2.6" fill="#0000ff"/>
<circle cx="514.5" cy="202.7" r="2.6" fill="#0000ff"/>
<circle cx="522.5" cy="247.9" r="2.6" fill="#0000ff"/>
<circle cx="530.5" cy="230" r="2.6" fill="#0000ff"/>
<circle cx="538.5" cy="275.7" r="2.6" fill="#0000ff"/>
<circle cx="546.5" cy="250" r="2.6" fill="#0000ff"/>
<circle cx="554.5" cy="259.9" r="2.6" fill="#0000ff"/>
<circle cx="562.5" cy="258.9" r="2.6" fill="#0000ff"/>
<circle cx="570.5" cy="252.8" r="2.6" fill="#0000ff"/>
<circle cx="578.5" cy="262.7" r="2.6" fill="#0000ff"/>
<circle cx="586.5" cy="239.7" r="2.6" fill="#0000ff"/>
<circle cx="594.5" cy="256.9" r="2.6" fill="#0000ff"/>
<circle cx="602.5" cy="297.7" r="2.6" fill="#0000ff"/>
<circle cx="610.5" cy="270.9" r="2.6" fill="#0000ff"/>
<circle cx="618.5" cy="275.7" r="2.6" fill="#0000ff"/>
<circle cx="626.5" cy="220.9" r="2.6" fill="#0000ff"/>
<circle cx="634.5" cy="227.7" r="2.6" fill="#0000ff"/>
<circle cx="642.5" cy="254.8" r="2.6" fill="#0000ff"/>
<circle cx="650.5" cy="255.8" r="2.6" fill="#0000ff"/>
<circle cx="658.5" cy="282.9" r="2.6" fill="#0000ff"/>
<circle cx="666.5" cy="284.9" r="2.6" fill="#0000ff"/>
<circle cx="674.5" cy="230.8" r="2.6" fill="#0000ff"/>
<circle cx="682.5" cy="296.9" r="2.6" fill="#0000ff"/>
<circle cx="690.5" cy="266" r="2.6" fill="#0000ff"/>
<circle cx="698.5" cy="262.7" r="2.6" fill="#0000ff"/>
<circle cx="706.5" cy="256.9" r="2.6" fill="#0000ff"/>
<circle cx="714.5" cy="278.8" r="2.6" fill="#0000ff"/>
<circle cx="722.5" cy="248.9" r="2.6" fill="#0000ff"/>
<path d="M386.5 49.5 l3.5 3.5 l-3.5 3.5 l-3.5 -3.5 Z" fill="#ff0000"/>
<path d="M386.5 351.4 l3.5 3.5 l-3.5 3.5 l-3.5 -3.5 Z" fill="#ff0000"/></svg>
<div class="t" style="left:1050.5px;top:36.5px;font-size:12.9px;line-height:13px;"><b>2026 Jan 16; (2321) Luznice occults UCAC4 614-030010 Observed by Toshihiro Horikawa</b><span style="font-size:12.3px;"> / PSF-Frame Photometry /</span></div>
<div class="t mono" style="left:1058px;top:80px;font-size:10.5px;line-height:10px;letter-spacing:-0.6px;">5000</div>
<div class="t mono" style="left:1058px;top:146px;font-size:10.5px;line-height:10px;letter-spacing:-0.6px;">4000</div>
<div class="t mono" style="left:1058px;top:212.5px;font-size:10.5px;line-height:10px;letter-spacing:-0.6px;">3000</div>
<div class="t mono" style="left:1058px;top:279px;font-size:10.5px;line-height:10px;letter-spacing:-0.6px;">2000</div>
<div class="t mono" style="left:1058px;top:345px;font-size:10.5px;line-height:10px;letter-spacing:-0.6px;">1000</div>
<div class="t mono" style="left:1076px;top:411px;font-size:10.5px;line-height:10px;">0</div>
<div class="t mono" style="left:1204px;top:424px;font-size:10.5px;line-height:10px;letter-spacing:-0.6px;">150</div>
<div class="t mono" style="left:1444px;top:424px;font-size:10.5px;line-height:10px;letter-spacing:-0.6px;">180</div>
<div class="t mono" style="left:1684px;top:424px;font-size:10.5px;line-height:10px;letter-spacing:-0.6px;">210</div>
<div class="t" style="left:1050px;top:440px;font-size:11.2px;line-height:11px;">Exp=338msec / Frm No.177.0 / Frm Mid= 11h10m31.4840s,&nbsp; End= 31.6530s</div>
<div style="left:1034px;top:463px;width:754px;height:2px;background:#a0a0a0;border-bottom:1px solid #fff;"></div>
<div class="t" style="left:1041.5px;top:469px;font-size:11.5px;line-height:11.5px;letter-spacing:-0.2px;">Current-</div>
<div class="t" style="left:1050px;top:484.5px;font-size:11.5px;line-height:11.5px;letter-spacing:-0.2px;">Frame</div>
<div class="t" style="left:1102.5px;top:469px;font-size:11.5px;line-height:11.5px;letter-spacing:-0.2px;">Luminous</div>
<div class="t" style="left:1101.5px;top:484.5px;font-size:11.5px;line-height:11.5px;letter-spacing:-0.2px;">Intensity</div>
<div class="tb" style="left:1042.5px;top:500.5px;width:47px;height:18px;"><span class="tt" style="font-size:11.5px;left:3px;letter-spacing:-0.3px;">177.0</span></div>
<div class="tb" style="left:1098.5px;top:500.5px;width:55px;height:18px;"><span class="tt" style="font-size:11.5px;left:3px;letter-spacing:-0.3px;">448.7</span></div>
<div style="left:1161.5px;top:470.5px;width:159px;height:17.5px;background:repeating-conic-gradient(#fbfbfb 0 25%,#ececec 0 50%) 0 0/2px 2px;"></div>
<div class="b" style="left:1161.5px;top:470.5px;width:17.5px;height:17.5px;"></div>
<div class="tri" style="left:1168px;top:475.5px;border-top:3.5px solid transparent;border-bottom:3.5px solid transparent;border-right:4px solid #000;"></div>
<div class="b" style="left:1233px;top:470.5px;width:16.5px;height:17.5px;"></div>
<div class="b" style="left:1304px;top:470.5px;width:16.5px;height:17.5px;"></div>
<div class="tri" style="left:1310px;top:475.5px;border-top:3.5px solid transparent;border-bottom:3.5px solid transparent;border-left:4px solid #000;"></div>
<div class="t" style="left:1327px;top:475px;font-size:11.5px;line-height:11.5px;letter-spacing:-0.2px;">Scale</div>
<div class="tb" style="left:1366.5px;top:468.5px;width:21px;height:18.5px;"><span class="tt" style="font-size:11px;left:2px;">4</span></div>
<div class="b" style="left:1390px;top:467px;width:16.5px;height:11.5px;"></div>
<div class="b" style="left:1390px;top:478.5px;width:16.5px;height:11.5px;"></div>
<div class="tri" style="left:1394.8px;top:470.8px;border-left:3.5px solid transparent;border-right:3.5px solid transparent;border-bottom:4px solid #000;"></div>
<div class="tri" style="left:1394.8px;top:482.2px;border-left:3.5px solid transparent;border-right:3.5px solid transparent;border-top:4px solid #000;"></div>
<div class="b" style="left:1162px;top:495.5px;width:40.5px;height:23.5px;"><span style="font-size:11.5px;letter-spacing:-0.5px;">-10Sec</span></div>
<div class="b" style="left:1206px;top:495.5px;width:33px;height:23.5px;"><span style="font-size:11.5px;letter-spacing:-0.5px;">-1Sec</span></div>
<div class="b" style="left:1242px;top:495.5px;width:34.5px;height:23.5px;"><span style="font-size:11.5px;letter-spacing:-0.5px;">+1Sec</span></div>
<div class="b" style="left:1280px;top:495.5px;width:40.5px;height:23.5px;"><span style="font-size:11.5px;letter-spacing:-0.5px;">+10Sec</span></div>
<div class="t" style="left:1330.5px;top:500px;font-size:11.5px;line-height:11.5px;letter-spacing:-0.2px;">Radius</div>
<div class="tb" style="left:1366.5px;top:500px;width:21px;height:19px;"><span class="tt" style="font-size:11px;left:2px;">2</span></div>
<div class="b" style="left:1390px;top:499px;width:16.5px;height:11.5px;"></div>
<div class="b" style="left:1390px;top:510.5px;width:16.5px;height:11.5px;"></div>
<div class="tri" style="left:1394.8px;top:502.8px;border-left:3.5px solid transparent;border-right:3.5px solid transparent;border-bottom:4px solid #000;"></div>
<div class="tri" style="left:1394.8px;top:514.2px;border-left:3.5px solid transparent;border-right:3.5px solid transparent;border-top:4px solid #000;"></div>
<div class="cb" style="left:1042.5px;top:529.5px;width:12px;height:12px;"><svg width="9" height="9" viewBox="0 0 9 9" style="position:absolute;left:1px;top:1px"><path d="M1 4 L3.2 6.6 L7.8 1.2" stroke="#000" stroke-width="1.9" fill="none"/></svg></div>
<div class="t" style="left:1059px;top:530px;font-size:11.5px;line-height:11.5px;letter-spacing:-0.2px;">Show Image of Clicked point</div>
<div class="cb" style="left:1042.5px;top:545.5px;width:12px;height:12px;"></div>
<div class="t" style="left:1059px;top:546px;font-size:11.5px;line-height:11.5px;letter-spacing:-0.2px;">Reproduce Aperture Position</div>
<div class="b" style="left:1216.5px;top:527.5px;width:72px;height:23.5px;"><span style="font-size:11.5px;">Save Image</span></div>
<div class="b" style="left:1294px;top:527.5px;width:118px;height:23.5px;"><span style="font-size:11.5px;">Copy to ClipBoard</span></div>
<div class="b" style="left:1274px;top:560.5px;width:120.5px;height:26px;justify-content:flex-start;"><span style="font-size:14px;font-weight:bold;margin-left:-4px;">Lunar Identification</span></div>
<div class="gb" style="left:1412.5px;top:469.5px;width:49px;height:81px;"></div>
<div class="t" style="left:1419px;top:465px;font-size:11.5px;line-height:11.5px;background:#f0f0f0;padding:0 1px;letter-spacing:0.8px;">Y Axis</div>
<div class="t" style="left:1418px;top:477px;font-size:11.5px;line-height:11.5px;letter-spacing:-0.3px;">Min Max</div>
<div class="b" style="left:1417.5px;top:487.5px;width:16px;height:17px;"></div>
<div class="tri" style="left:1421.5px;top:493.5px;border-left:4px solid transparent;border-right:4px solid transparent;border-bottom:5px solid #000;"></div>
<div class="b" style="left:1417.5px;top:505px;width:16px;height:19px;"></div>
<div class="b" style="left:1417.5px;top:527px;width:16px;height:17.5px;"></div>
<div class="tri" style="left:1421.5px;top:533.5px;border-left:4px solid transparent;border-right:4px solid transparent;border-top:5px solid #000;"></div>
<div class="b" style="left:1440px;top:487.5px;width:17px;height:17px;"></div>
<div class="tri" style="left:1444.5px;top:493.5px;border-left:4px solid transparent;border-right:4px solid transparent;border-bottom:5px solid #000;"></div>
<div class="b" style="left:1440px;top:505px;width:17px;height:19px;"></div>
<div class="b" style="left:1440px;top:527px;width:17px;height:17.5px;"></div>
<div class="tri" style="left:1444.5px;top:533.5px;border-left:4px solid transparent;border-right:4px solid transparent;border-top:5px solid #000;"></div>
<div class="gb" style="left:1465px;top:469.5px;width:59.5px;height:52.5px;"></div>
<div class="t" style="left:1471px;top:465px;font-size:11.5px;line-height:11.5px;background:#f0f0f0;padding:0 1px;letter-spacing:-0.2px;">Line</div>
<div class="cb" style="left:1472px;top:477px;width:12px;height:12px;"><svg width="9" height="9" viewBox="0 0 9 9" style="position:absolute;left:1px;top:1px"><path d="M1 4 L3.2 6.6 L7.8 1.2" stroke="#000" stroke-width="1.9" fill="none"/></svg></div>
<div class="t" style="left:1490.5px;top:477px;font-size:11.5px;line-height:11.5px;letter-spacing:-0.2px;">Axis</div>
<div class="cb" style="left:1472px;top:491.5px;width:12px;height:12px;"><svg width="9" height="9" viewBox="0 0 9 9" style="position:absolute;left:1px;top:1px"><path d="M1 4 L3.2 6.6 L7.8 1.2" stroke="#000" stroke-width="1.9" fill="none"/></svg></div>
<div class="t" style="left:1490.5px;top:491.5px;font-size:11.5px;line-height:11.5px;letter-spacing:-0.2px;">Data</div>
<div class="b" style="left:1472px;top:504px;width:46px;height:14.5px;"><span style="font-size:11.5px;">Hilight</span></div>
<div class="b" style="left:1465px;top:527.5px;width:64px;height:26.5px;"><span style="font-size:11.5px;">[3D] Image</span></div>
<div class="gb" style="left:1528px;top:469.5px;width:55.5px;height:53px;"></div>
<div class="t" style="left:1534px;top:465px;font-size:11.5px;line-height:11.5px;background:#f0f0f0;padding:0 1px;letter-spacing:-0.2px;">Width</div>
<div class="rb" style="left:1536px;top:481.5px;width:12px;height:12px;"><div class="rd"></div></div>
<div class="t" style="left:1554.5px;top:482px;font-size:11.5px;line-height:11.5px;letter-spacing:-0.2px;">Part</div>
<div class="rb" style="left:1536px;top:502.5px;width:12px;height:12px;"></div>
<div class="t" style="left:1554.5px;top:503px;font-size:11.5px;line-height:11.5px;letter-spacing:-0.2px;">Entire</div>
<div class="b" style="left:1590px;top:467.5px;width:142.5px;height:17px;"><span style="font-size:11.5px;">Correction for absorption</span></div>
<div class="b" style="left:1590px;top:488px;width:102.5px;height:16px;"><span style="font-size:11.5px;">Noise Reduction</span></div>
<div class="b" style="left:1696.5px;top:488px;width:36px;height:15.5px;"><span style="font-size:11.5px;">Reset</span></div>
<div class="cb" style="left:1589.5px;top:508px;width:12px;height:12px;"><svg width="9" height="9" viewBox="0 0 9 9" style="position:absolute;left:1px;top:1px"><path d="M1 4 L3.2 6.6 L7.8 1.2" stroke="#000" stroke-width="1.9" fill="none"/></svg></div>
<div class="t" style="left:1606px;top:508.5px;font-size:11.5px;line-height:11.5px;letter-spacing:-0.2px;">Information</div>
<div class="b" style="left:1746px;top:467.5px;width:35px;height:23.5px;"><span style="font-size:11.5px;">close</span></div>
<div class="cb" style="left:1738.5px;top:505.5px;width:12px;height:12px;"><svg width="9" height="9" viewBox="0 0 9 9" style="position:absolute;left:1px;top:1px"><path d="M1 4 L3.2 6.6 L7.8 1.2" stroke="#000" stroke-width="1.9" fill="none"/></svg></div>
<div class="t" style="left:1755px;top:506px;font-size:11.5px;line-height:11.5px;letter-spacing:-0.2px;">ID</div>
<div class="gb" style="left:1688px;top:518.5px;width:95.5px;height:35px;"></div>
<div class="t" style="left:1694.5px;top:515px;font-size:11.5px;line-height:11.5px;background:#f0f0f0;padding:0 1px;letter-spacing:-0.2px;">Object</div>
<div class="bp" style="left:1694px;top:529px;width:18.5px;height:17.5px;background:#f6f6f6;"><span style="font-size:11.5px;">A</span></div>
<div class="b" style="left:1716px;top:529px;width:18px;height:17.5px;"><span style="font-size:11.5px;"><span style="outline:1px dotted #000;outline-offset:0px;">B</span></span></div>
<div class="b" style="left:1738px;top:529px;width:19px;height:17.5px;"><span style="font-size:11.5px;">C</span></div>
<div class="b" style="left:1760px;top:529px;width:17.5px;height:17.5px;"><span style="font-size:11.5px;">L</span></div>
<div class="b" style="left:1405px;top:560.5px;width:167.5px;height:25.5px;"><span style="font-size:14px;font-weight:bold;">Diffraction Analysis</span></div>
<div class="b" style="left:1578px;top:560.5px;width:105px;height:25.5px;"><span style="font-size:13.4px;font-weight:bold;color:#101040;">Make Report</span></div>
<div style="left:1034px;top:593px;width:754px;height:2px;background:#a0a0a0;border-bottom:1px solid #fff;"></div>
<div class="gb" style="left:1042px;top:620px;width:736px;height:90px;"></div>
<div class="t" style="left:1048.5px;top:616px;font-size:11.5px;line-height:11.5px;background:#f0f0f0;padding:0 1px;letter-spacing:-0.2px;">S/N vs Error</div>
<div class="t" style="left:1050.5px;top:631px;font-size:13.2px;line-height:13.2px;font-weight:bold;">S/N (Full drop)</div>
<div class="tb" style="left:1154px;top:629px;width:56px;height:26px;"><span class="tt" style="font-size:15px;left:6px;font-weight:bold;color:#0000ff;">4.0</span></div>
<div class="t" style="left:1235px;top:631px;font-size:13.2px;line-height:13.2px;font-weight:bold;">S/N</div>
<div class="tb" style="left:1265.5px;top:628.5px;width:48.5px;height:24px;"><span class="tt" style="font-size:14px;left:2px;font-weight:bold;color:#ff0000;">3.8</span></div>
<div class="t" style="left:1322px;top:631px;font-size:13.2px;line-height:13.2px;font-weight:bold;">expected on</div>
<div class="tb" style="left:1409.5px;top:628.5px;width:48.5px;height:24px;"><span class="tt" style="font-size:14px;left:3px;font-weight:bold;">3.3</span></div>
<div class="t" style="left:1466px;top:631px;font-size:13.2px;line-height:13.2px;font-weight:bold;">Mag drop</div>
<div class="t" style="left:1562px;top:631px;font-size:13.2px;line-height:13.2px;font-weight:bold;">Frame exposure</div>
<div class="tb" style="left:1682px;top:628.5px;width:48px;height:24px;"><span class="tt" style="font-size:14px;left:3px;font-weight:bold;">338</span></div>
<div class="t" style="left:1738px;top:631px;font-size:13.2px;line-height:13.2px;font-weight:bold;">msec</div>
<div class="t" style="left:1050px;top:664px;font-size:13.2px;line-height:13.2px;font-weight:bold;">Fresnel</div>
<div class="t" style="left:1050px;top:680px;font-size:13.2px;line-height:13.2px;font-weight:bold;">Number</div>
<div class="tb" style="left:1106px;top:668px;width:48px;height:24.5px;"><span class="tt" style="font-size:14px;left:3px;font-weight:bold;">601</span></div>
<div class="t" style="left:1170px;top:664px;font-size:13.2px;line-height:13.2px;font-weight:bold;">Lower Limit</div>
<div class="t" style="left:1178px;top:680px;font-size:13.2px;line-height:13.2px;font-weight:bold;">for detect</div>
<div class="tb" style="left:1250px;top:668px;width:56px;height:24.5px;"><span class="tt" style="font-size:14px;left:3px;font-weight:bold;color:#0000ff;">1056</span></div>
<div class="t" style="left:1307px;top:671px;font-size:13.2px;line-height:13.2px;font-weight:bold;">msec</div>
<div class="t" style="left:1354px;top:664px;font-size:13.2px;line-height:13.2px;font-weight:bold;">Predicted</div>
<div class="t" style="left:1354px;top:679px;font-size:12.5px;line-height:12.5px;font-weight:bold;">Time Error</div>
<div class="tb" style="left:1426px;top:668px;width:64px;height:24.5px;"><span class="tt" style="font-size:14px;left:3px;font-weight:bold;color:#ff0000;">218</span></div>
<div class="t" style="left:1491px;top:678px;font-size:13.2px;line-height:13.2px;font-weight:bold;">msec</div>
<div class="t" style="left:1538px;top:663px;font-size:13.2px;line-height:13.2px;font-weight:bold;">Expected Error for</div>
<div class="t" style="left:1538px;top:679px;font-size:13.2px;line-height:13.2px;font-weight:bold;">Analyzing event time</div>
<div class="tb" style="left:1682px;top:668px;width:48px;height:24.5px;"><span class="tt" style="font-size:14px;left:3px;font-weight:bold;">108</span></div>
<div class="t" style="left:1735px;top:678px;font-size:13.2px;line-height:13.2px;font-weight:bold;">msec</div>
</body></html>
